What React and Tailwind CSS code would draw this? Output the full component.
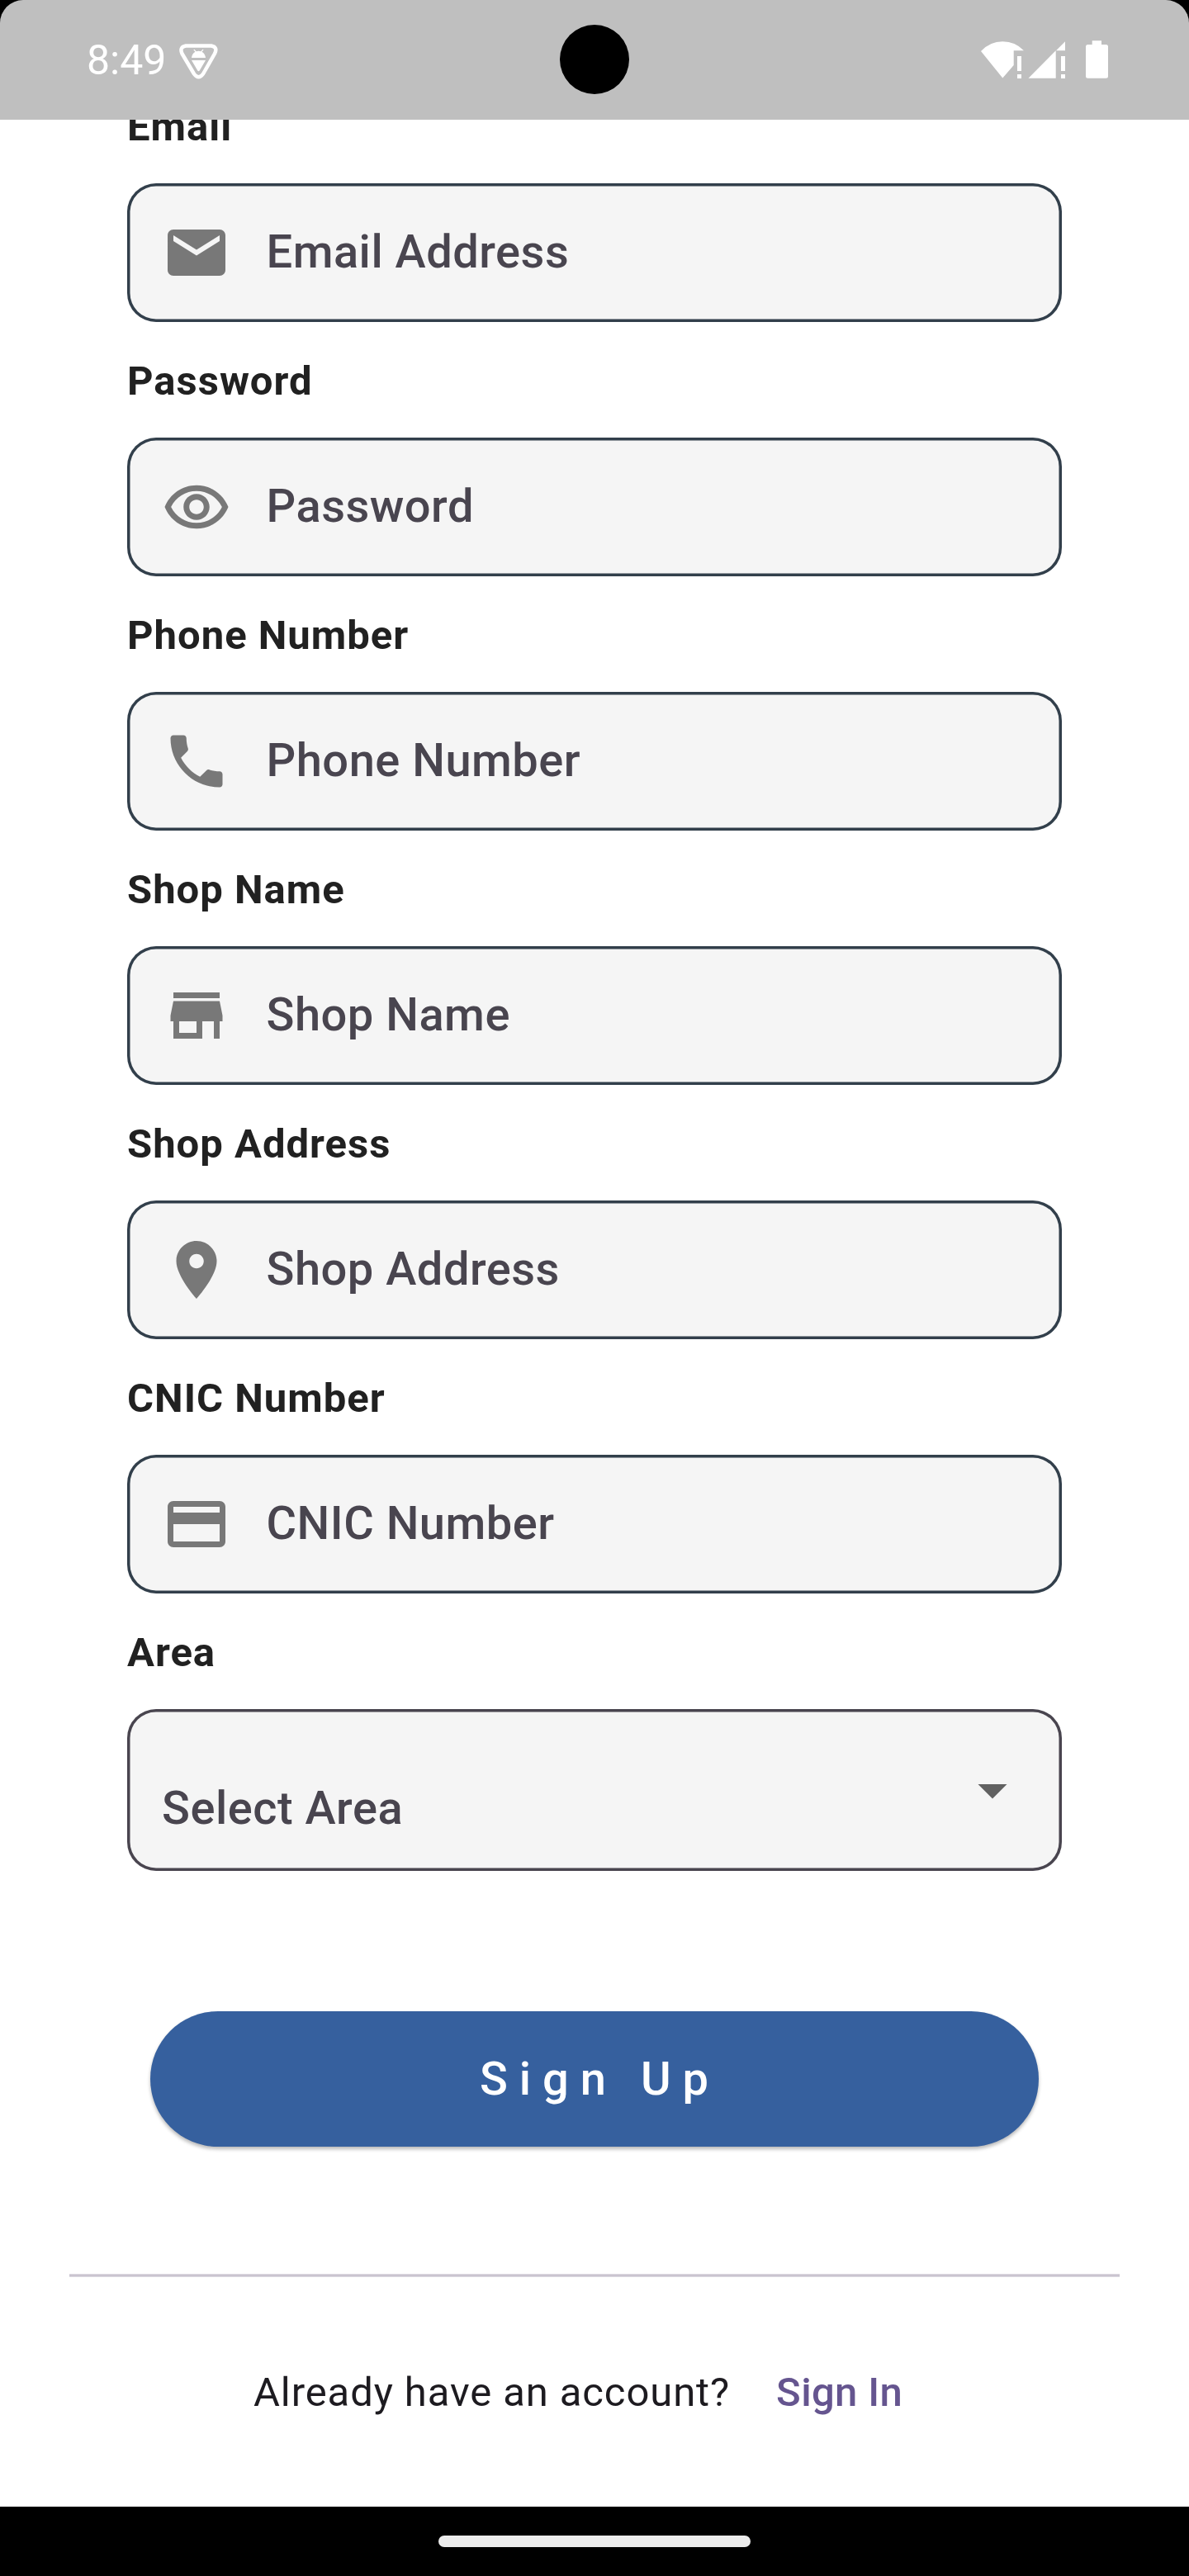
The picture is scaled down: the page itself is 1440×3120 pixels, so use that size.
const ICONS = {
  mail: 'M20 4H4c-1.1 0-1.99.9-1.99 2L2 18c0 1.1.9 2 2 2h16c1.1 0 2-.9 2-2V6c0-1.1-.9-2-2-2zm0 4l-8 5-8-5V6l8 5 8-5v2z',
  eye: 'M12 6.5c3.79 0 7.17 2.13 8.82 5.5C19.17 15.37 15.79 17.5 12 17.5s-7.17-2.13-8.82-5.5C4.83 8.63 8.21 6.5 12 6.5m0-2C7 4.5 2.73 7.61 1 12c1.73 4.39 6 7.5 11 7.5s9.27-3.11 11-7.5c-1.73-4.39-6-7.5-11-7.5zm0 5c1.38 0 2.5 1.12 2.5 2.5s-1.12 2.5-2.5 2.5-2.5-1.12-2.5-2.5 1.12-2.5 2.5-2.5m0-2c-2.48 0-4.5 2.02-4.5 4.5s2.02 4.5 4.5 4.5 4.5-2.02 4.5-4.5-2.02-4.5-4.5-4.5z',
  phone: 'M6.62 10.79c1.44 2.83 3.76 5.14 6.59 6.59l2.2-2.2c.27-.27.67-.36 1.02-.24 1.12.37 2.33.57 3.57.57.55 0 1 .45 1 1V20c0 .55-.45 1-1 1-9.39 0-17-7.61-17-17 0-.55.45-1 1-1h3.5c.55 0 1 .45 1 1 0 1.25.2 2.45.57 3.57.11.35.03.74-.25 1.02l-2.2 2.2z',
  store: 'M20 4H4v2h16V4zm1 10v-2l-1-5H4l-1 5v2h1v6h10v-6h4v6h2v-6h1zm-9 4H6v-4h6v4z',
  pin: 'M12 2C8.13 2 5 5.13 5 9c0 5.25 7 13 7 13s7-7.75 7-13c0-3.87-3.13-7-7-7zm0 9.5c-1.38 0-2.5-1.12-2.5-2.5s1.12-2.5 2.5-2.5 2.5 1.12 2.5 2.5-1.12 2.5-2.5 2.5z',
  card: 'M20 4H4c-1.11 0-1.99.89-1.99 2L2 18c0 1.11.89 2 2 2h16c1.11 0 2-.89 2-2V6c0-1.11-.89-2-2-2zm0 14H4v-6h16v6zm0-10H4V6h16v2z',
  drop: 'M7 10l5 5 5-5z',
};

const FIELDS = [
  ['Email', 'Email Address', 'mail'],
  ['Password', 'Password', 'eye'],
  ['Phone Number', 'Phone Number', 'phone'],
  ['Shop Name', 'Shop Name', 'store'],
  ['Shop Address', 'Shop Address', 'pin'],
  ['CNIC Number', 'CNIC Number', 'card'],
];

function Icon({ name, className }) {
  return (
    <svg viewBox="0 0 24 24" className={`size-[84px] shrink-0 ${className}`}>
      <path d={ICONS[name]} />
    </svg>
  );
}

function Label({ children }) {
  return (
    <div className="h-[56px] text-[49px] leading-[58px] font-bold tracking-[1px] whitespace-nowrap text-[#212121]">
      {children}
    </div>
  );
}

function Field({ label, hint, icon }) {
  return (
    <div className="h-[308px]">
      <Label>{label}</Label>
      <div className="mt-[41px] flex h-[168px] items-center rounded-[35px] bg-[#f5f5f5] pl-[42px] shadow-[inset_0_0_0_3.5px_#323f4b]">
        <Icon name={icon} className="fill-[#787878]" />
        <span className="ml-[42.5px] pb-[3px] text-[56px] leading-[64px] font-medium tracking-[0.5px] whitespace-nowrap text-[#49454f]">
          {hint}
        </span>
      </div>
    </div>
  );
}

function StatusBar() {
  return (
    <header className="relative z-10 flex h-[145px] items-center justify-between rounded-t-[28px] bg-[#bfbfbf] pr-[98px] pl-[105px] text-white">
      <div className="flex items-center">
        <span className="text-[50px] leading-[58px]">8:49</span>
        <svg viewBox="216 52 50 45" className="mt-[4px] ml-[14.5px] h-[45px] w-[50px]">
          <path d="M225 55.5H256Q264 57 260 65L246 89.5Q240.500 97 235 89.500L220.500 65Q217 57 225 55.500Z" fill="none" stroke="white" strokeWidth="4.5" strokeLinejoin="round" />
          <path d="M232 70Q232.500 65 236.500 62.800L234.300 60.200L235.300 59.700L237.800 62.300Q240.500 61.300 243.200 62.300L245.600 59.700L246.600 60.200L244.500 62.800Q248.500 65 249 70Z" fill="white" />
          <path d="M232 73H249L242 85Q240.500 87.500 239 85Z" fill="white" />
        </svg>
      </div>
      <div className="absolute top-[30px] left-[678px] size-[84px] rounded-full bg-black" />
      <svg viewBox="1188 48 154 48" className="mt-[-1px] h-[48px] w-[154px] fill-white">
        <path d="M1188 62Q1199 50.300 1214.300 50.300T1240 61.300H1227.700V79L1214.300 94.500Z" />
        <path d="M1232 68h5v18h-5zM1232 90h5v5h-5z" />
        <path d="M1245.500 94.700L1278.700 61.300V94.700ZM1279 61.300L1290 50.300V61.300Z" />
        <path d="M1285 68h5v18h-5zM1285 90h5v5h-5z" />
        <path d="M1322.700 49.300h11.300v4.700h5.500q2.500 0 2.500 2.500v35.700q0 2.500-2.500 2.500h-22q-2.500 0-2.500-2.500v-35.700q0-2.500 2.500-2.500h5.200z" />
      </svg>
    </header>
  );
}

export default function App() {
  return (
    <div className="h-[3120px] w-[1440px] overflow-hidden bg-black font-[Roboto,sans-serif]">
      <StatusBar />
      <main className="flow-root h-[2891px] overflow-hidden bg-white">
        <form className="-mt-[20px] px-[154px]">
          {FIELDS.map(([label, hint, icon]) => (
            <Field key={label} label={label} hint={hint} icon={icon} />
          ))}
          <Label>Area</Label>
          <div className="mt-[41px] flex h-[196px] items-center justify-between rounded-[35px] bg-[#f5f5f5] pr-[42px] pl-[42px] shadow-[inset_0_0_0_3.5px_#49454f]">
            <span className="pt-[44px] text-[56px] leading-[64px] font-medium tracking-[0.5px] whitespace-nowrap text-[#49454f]">
              Select Area
            </span>
            <Icon name="drop" className="fill-[#616161]" />
          </div>
          <button type="button" className="mx-[28px] mt-[169.5px] flex h-[164.5px] w-[1076px] items-center justify-center rounded-full bg-[#36609e] pl-[13px] text-[56px] leading-[64px] font-medium tracking-[14px] text-white shadow-[0_3px_4px_rgba(0,0,0,0.28)]">
            Sign Up
          </button>
        </form>
        <div className="mx-[84px] mt-[154px] h-[4px] border-y border-[#dcd8e0] bg-[#cac4d0]" />
        <div className="mt-[105px] flex h-[70px] items-center pl-[307px] text-[49px] leading-[70px] tracking-[0.9px] whitespace-nowrap">
          <span className="text-[#1d1b20]">Already have an account?</span>
          <span className="ml-[56px] font-medium tracking-[0.35px] text-[#65558f]">Sign In</span>
        </div>
      </main>
      <footer className="flex h-[84px] items-center justify-center">
        <div className="h-[14px] w-[378px] rounded-full bg-[#ececec]" />
      </footer>
    </div>
  );
}
